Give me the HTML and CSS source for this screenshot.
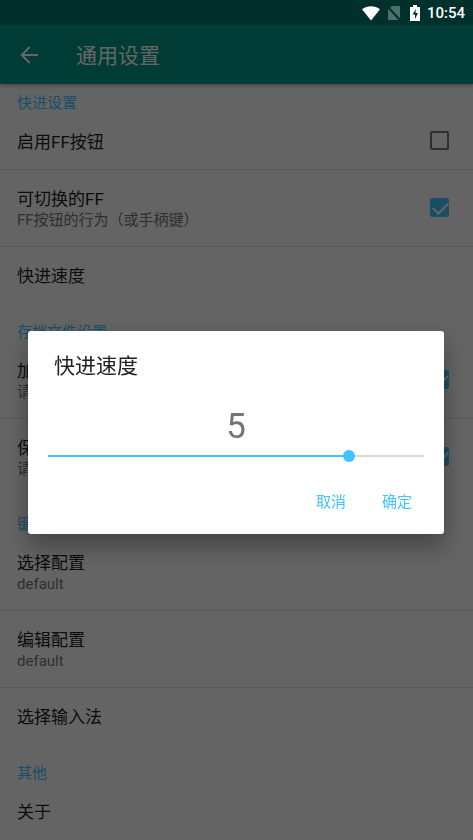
FILE: index.html
```html
<!DOCTYPE html>
<html lang="zh-CN">
<head>
    <meta charset="UTF-8">
    <meta name="viewport" content="width=device-width, initial-scale=1.0">
    <title>通用设置</title>
    <link rel="stylesheet" href="styles.css">
</head>
<body>
    <!-- Status bar -->
    <div class="status-bar">
        <svg class="wifi" width="20" height="16" viewBox="0 0 20 16"><path d="M1 4.2C6 .2 14 .2 19 4.2L10 15.5z" fill="#fff"/></svg>
        <svg class="sim" width="14" height="16" viewBox="0 0 14 16"><path d="M5 1h8v14H1V5z" fill="#4c7069"/><path d="M0 1l13 14" stroke="#00302b" stroke-width="2"/></svg>
        <svg class="battery" width="10" height="16" viewBox="0 0 10 16"><path d="M3 0h4v2h3v14H0V2h3z" fill="#fff"/><path d="M6 4L2.500 9.500H5V14l3-6H5.500z" fill="#00302b"/></svg>
        <span class="time">10:54</span>
    </div>

    <header class="app-bar">
        <button class="back" type="button" aria-label="返回">
            <svg width="18" height="18" viewBox="0 0 18 18"><path d="M18 9H2M9.700 1L1.700 9l8 8" fill="none" stroke="currentColor" stroke-width="2"/></svg>
        </button>
        <h1>通用设置</h1>
    </header>

    <main class="settings">
        <section>
            <h2>快进设置</h2>
            <label class="row">
                <span class="text"><span class="name">启用FF按钮</span></span>
                <input type="checkbox">
            </label>
            <label class="row double">
                <span class="text"><span class="name">可切换的FF</span><span class="summary">FF按钮的行为（或手柄键）</span></span>
                <input type="checkbox" checked>
            </label>
            <button class="row" type="button"><span class="text"><span class="name">快进速度</span></span></button>
        </section>

        <section>
            <h2>存档文件设置</h2>
            <label class="row double">
                <span class="text"><span class="name">加载</span><span class="summary">请确认</span></span>
                <input type="checkbox" checked>
            </label>
            <label class="row double">
                <span class="text"><span class="name">保存</span><span class="summary">请确认</span></span>
                <input type="checkbox" checked>
            </label>
        </section>

        <section>
            <h2>键位设置</h2>
            <button class="row double" type="button"><span class="text"><span class="name">选择配置</span><span class="summary">default</span></span></button>
            <button class="row double" type="button"><span class="text"><span class="name">编辑配置</span><span class="summary">default</span></span></button>
            <button class="row" type="button"><span class="text"><span class="name">选择输入法</span></span></button>
        </section>

        <section>
            <h2>其他</h2>
            <button class="row" type="button"><span class="text"><span class="name">关于</span></span></button>
        </section>
    </main>

    <!-- Speed dialog -->
    <div class="overlay">
        <div class="dialog" role="dialog" aria-labelledby="dialogTitle">
            <h2 id="dialogTitle">快进速度</h2>
            <output class="value" for="speed">5</output>
            <input type="range" id="speed" min="1" max="6" value="5" aria-labelledby="dialogTitle">
            <div class="actions">
                <button type="button">取消</button>
                <button type="button">确定</button>
            </div>
        </div>
    </div>
</body>
</html>
```
FILE: styles.css
```css
* {
    box-sizing: border-box;
}
body {
    margin: 0;
    background: #fafafa;
    font-family: Roboto, "Noto Sans CJK SC", sans-serif;
    color: #212121;
}
h1, h2 {
    margin: 0;
    font-weight: 400;
}
button {
    margin: 0;
    padding: 0;
    border: 0;
    background: none;
    font: inherit;
    color: inherit;
    cursor: pointer;
}

/* Status bar stays above the dimmed page */
.status-bar {
    position: relative;
    z-index: 2;
    display: flex;
    align-items: center;
    justify-content: flex-end;
    height: 25px;
    padding-right: 8px;
    background: #00302b;
    color: #fff;
}
.sim {
    margin-left: 6px;
}
.battery {
    margin-left: 9px;
}
.time {
    margin-left: 7px;
    font-size: 15px;
    font-weight: 500;
    line-height: 24px;
}

.app-bar {
    position: relative;
    display: flex;
    align-items: center;
    height: 59px;
    padding-left: 20px;
    background: #009688;
    color: #fff;
    box-shadow: 0 2px 4px rgba(0, 0, 0, 0.3);
}
.back {
    display: flex;
    width: 56px;
}
.app-bar h1 {
    padding-top: 2px;
    font-size: 21px;
    line-height: 30px;
}

.settings h2 {
    padding: 18px 17px 0;
    font-size: 15px;
    line-height: 20px;
    color: #40c4ff;
}
.settings section:first-child h2 {
    padding-top: 9px;
}
.row {
    display: flex;
    align-items: center;
    justify-content: space-between;
    width: 100%;
    min-height: 57px;
    padding: 0 24px 0 17px;
    border-bottom: 1px solid #dcdcdc;
    text-align: left;
}
.row:last-child {
    border-bottom-color: transparent;
}
.double {
    min-height: 77px;
}
.text {
    display: flex;
    flex-direction: column;
    padding-top: 3px;
}
.name {
    font-size: 17px;
    line-height: 21px;
}
.summary {
    font-size: 15px;
    line-height: 20px;
    color: #757575;
}

input[type="checkbox"] {
    appearance: none;
    position: relative;
    width: 19px;
    height: 19px;
    margin: 0 0 2px;
    border: 2px solid #757575;
    border-radius: 2px;
}
input[type="checkbox"]:checked {
    border-color: #40c4ff;
    background: #40c4ff;
}
input[type="checkbox"]:checked::after {
    content: "";
    position: absolute;
    left: 4px;
    top: -1px;
    width: 7px;
    height: 13px;
    border: solid #fafafa;
    border-width: 0 2px 2px 0;
    transform: rotate(45deg);
}

.overlay {
    position: fixed;
    inset: 0;
    z-index: 1;
    display: flex;
    align-items: center;
    padding: 25px 29px 0 28px;
    background: rgba(0, 0, 0, 0.6);
}
.dialog {
    display: flex;
    flex-direction: column;
    width: 100%;
    padding: 19px 14px 13px;
    border-radius: 3px;
    background: #fff;
    box-shadow: 0 12px 24px rgba(0, 0, 0, 0.35);
}
.dialog h2 {
    padding: 0 12px;
    font-size: 21px;
    line-height: 32px;
}
.value {
    margin-top: 25px;
    font-size: 35px;
    line-height: 40px;
    text-align: center;
    color: #757575;
}
input[type="range"] {
    appearance: none;
    width: 100%;
    height: 18px;
    margin: 0;
    background: linear-gradient(to right, #40c4ff 80%, #d9d9d9 80%) center / calc(100% - 12px) 2px no-repeat;
}
input[type="range"]::-webkit-slider-thumb {
    appearance: none;
    width: 12px;
    height: 12px;
    border-radius: 50%;
    background: #40c4ff;
}
.actions {
    display: flex;
    justify-content: flex-end;
    margin-top: 18px;
}
.actions button {
    width: 66px;
    font-size: 15px;
    line-height: 38px;
    color: #40c4ff;
}
```
